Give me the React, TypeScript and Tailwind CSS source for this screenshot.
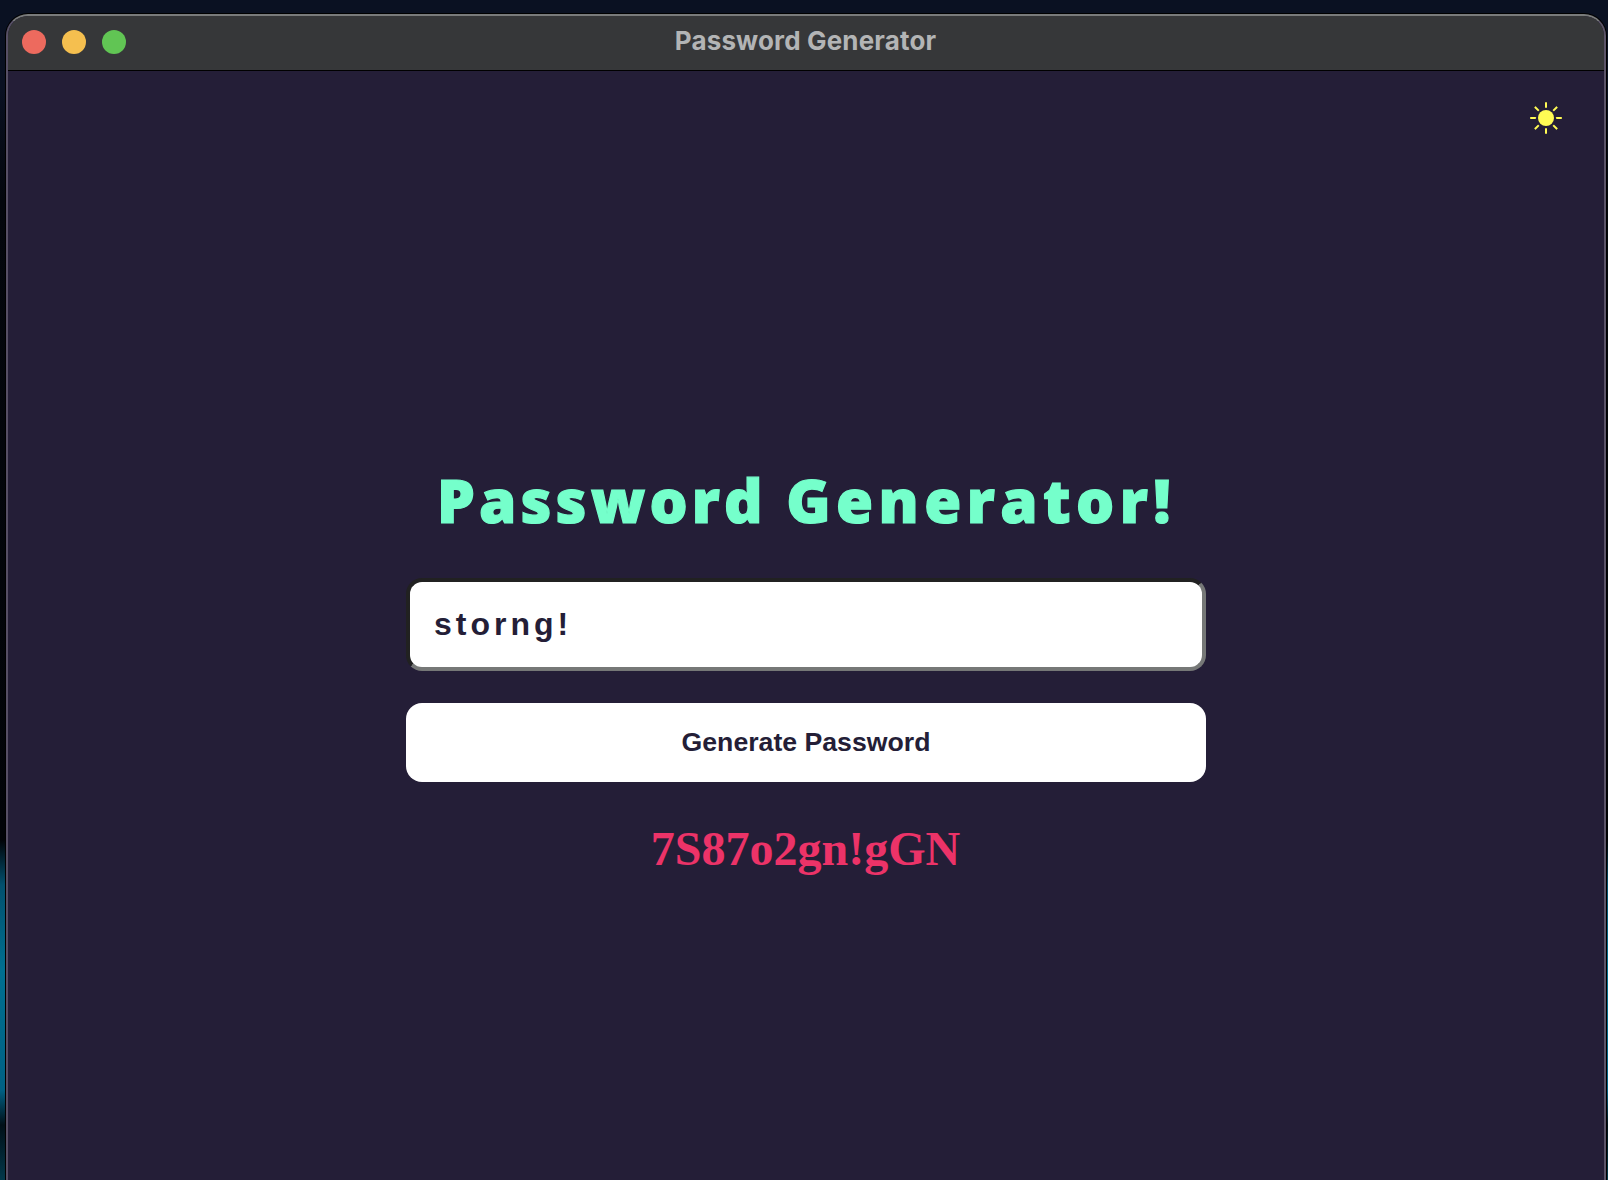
import { useState } from "react";

const RAY_ANGLES = [0, 45, 90, 135, 180, 225, 270, 315];

function SunIcon() {
  return (
    <svg width="32" height="32" viewBox="0 0 32 32" fill="#fffb54" aria-hidden="true">
      <circle cx="16" cy="16" r="8" />
      {RAY_ANGLES.map((a) => (
        <rect key={a} x="15" y="0.2" width="2" height="5.6" rx="0.2" transform={`rotate(${a} 16 16)`} />
      ))}
    </svg>
  );
}

function TitleBar() {
  return (
    <header className="grid h-[55px] shrink-0 grid-cols-[1fr_auto_1fr] items-center border-b border-black bg-[#363739] pb-[5px]">
      <div className="mt-[3px] flex gap-4 pl-3.5">
        <span className="size-6 rounded-full bg-[#ed6a5e]" />
        <span className="size-6 rounded-full bg-[#f5bf4f]" />
        <span className="size-6 rounded-full bg-[#61c554]" />
      </div>
      <div className="pr-px font-['Inter',sans-serif] text-[26px] leading-[31px] font-bold tracking-[0.15px] text-[#b3b4b5]">
        Password Generator
      </div>
      <div />
    </header>
  );
}

export default function App() {
  const [hint, setHint] = useState("storng!");
  return (
    <div className="flex h-[1180px] w-[1608px] flex-col overflow-hidden bg-[linear-gradient(to_bottom,#0a1122_0px,#0a1122_90px,#04070d_200px,#020408_840px,#02506e_885px,#006f90_970px,#006184_1090px,#011018_1125px,#02384a_1180px)] pt-3.5 pr-0.5 pl-1.5">
      <div className="flex flex-1 flex-col overflow-hidden rounded-t-[22px] border-2 border-b-0 border-t-[#797b7b] border-r-[#5b5468] border-l-[#564f65] bg-[#241e37] shadow-[0_0_0_1px_#000]">
        <TitleBar />
        <main className="flex flex-1 flex-col">
          <div className="flex justify-end pt-[31px] pr-[42px]">
            <button aria-label="Toggle theme">
              <SunIcon />
            </button>
          </div>
          <div className="mx-auto mt-[324px] flex w-[800px] flex-col items-center">
            <h1 className="pl-px font-['Open_Sans',sans-serif] text-[60px] leading-[85px] font-extrabold tracking-[4px] whitespace-nowrap text-[#75ffcb] [-webkit-text-stroke:1.2px_#75ffcb]">
              <span className="tracking-[4.1px]">Password</span> <span className="tracking-[5.4px]">Generator!</span>
            </h1>
            <input
              value={hint}
              onChange={(e) => setHint(e.target.value)}
              className="mt-[35px] h-[93px] w-full rounded-2xl border-4 border-t-[#212121] border-r-[#767877] border-b-[#767877] border-l-[#212121] bg-white px-6 font-['Liberation_Sans',sans-serif] text-[32px] font-bold tracking-[4px] text-[#241e37] outline-none"
            />
            <button className="mt-8 h-[79px] w-full rounded-2xl bg-white pb-0.5 font-['Liberation_Sans',sans-serif] text-[26.667px] font-bold text-[#241e37]">
              Generate Password
            </button>
            <p className="mt-10 pr-px font-['Liberation_Serif',serif] text-[48px] leading-[53px] font-bold text-[#ec3368]">
              7S87o2gn!gGN
            </p>
          </div>
        </main>
      </div>
    </div>
  );
}
